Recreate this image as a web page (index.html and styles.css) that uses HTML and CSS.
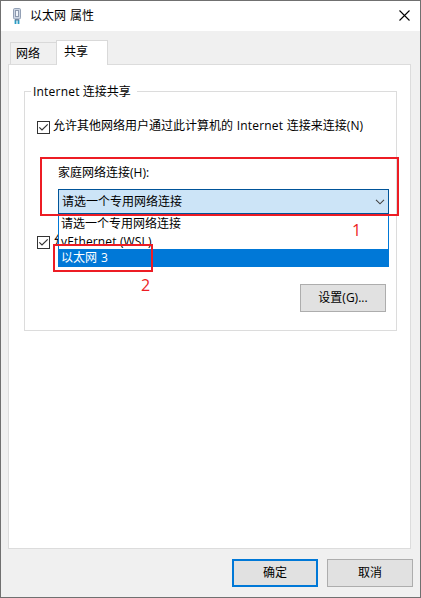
FILE: index.html
```html
<!DOCTYPE html>
<html lang="zh-CN">
<head>
  <meta charset="UTF-8" />
  <meta name="viewport" content="width=device-width, initial-scale=1.0" />
  <title>以太网 属性</title>
  <link rel="stylesheet" href="styles.css">
</head>
<body>
  <div class="window">
    <!-- 标题栏 -->
    <div class="titlebar">
      <svg class="plug" width="10" height="17" viewBox="0 0 10 17">
        <path d="M3.5 12v4M6.5 12v4" stroke="#2a9cc4" stroke-width="1.8" />
        <path d="M3 11h4v1.5H3z" fill="#5b7590" />
        <rect x="1.5" y="0.5" width="7" height="10.5" rx="1.2" fill="#cdd6e4" stroke="#93a0b5" />
        <rect x="3.5" y="2.5" width="3" height="6" fill="#f0f4fa" stroke="#8d99ad" />
      </svg>
      <span class="title">以太网 属性</span>
      <svg class="close" width="11" height="11" viewBox="0 0 11 11">
        <path d="M0.5 0.5l10 10M10.5 0.5l-10 10" stroke="#000" stroke-width="1.1" />
      </svg>
    </div>

    <!-- 选项卡 -->
    <div class="tabs">
      <div class="tab">网络</div>
      <div class="tab active">共享</div>
    </div>

    <div class="pane">
      <div class="group">
        <div class="legend"><span class="net">Internet</span> 连接共享</div>

        <div class="check-row">
          <span class="checkbox">
            <svg width="11" height="11" viewBox="0 0 11 11"><path d="M1.3 5.3l2.7 2.7L9.7 2.3" fill="none" stroke="#333" stroke-width="1.2" /></svg>
          </span>
          <span class="check-text">允许其他网络用户通过此计算机的 <span class="net">Internet</span> 连接来连接(N)</span>
        </div>

        <div class="home">
          <div class="home-label">家庭网络连接(H):</div>
          <div class="combo">
            <span>请选一个专用网络连接</span>
            <svg width="10" height="6" viewBox="0 0 10 6"><path d="M1 0.8l4 4 4-4" fill="none" stroke="#444" stroke-width="1.1" /></svg>
            <div class="dropdown">
              <div class="option">请选一个专用网络连接</div>
              <div class="option clipped">vEthernet (WSL)</div>
              <div class="option selected">以太网 3</div>
            </div>
          </div>
          <div class="mark mark-combo"></div>
          <div class="mark mark-option"></div>
          <div class="num num-one">1</div>
          <div class="num num-two">2</div>
        </div>

        <div class="check-row second">
          <span class="checkbox">
            <svg width="11" height="11" viewBox="0 0 11 11"><path d="M1.3 5.3l2.7 2.7L9.7 2.3" fill="none" stroke="#333" stroke-width="1.2" /></svg>
          </span>
          <span class="covered">允</span>
        </div>

        <button class="btn settings">设置(G)...</button>
      </div>
    </div>

    <!-- 底部按钮 -->
    <div class="footer">
      <button class="btn primary">确定</button>
      <button class="btn">取消</button>
    </div>
  </div>
</body>
</html>
```

FILE: styles.css
```css
* {
  box-sizing: border-box;
}
body {
  margin: 0;
  font-family: "Open Sans", "Noto Sans CJK SC", sans-serif;
  font-size: 12px;
  line-height: 16px;
  color: #000;
}
.window {
  width: 421px;
  height: 598px;
  background: #f0f0f0;
  border: 1px solid #707070;
  overflow: hidden;
}
/* 标题栏 */
.titlebar {
  display: flex;
  align-items: center;
  height: 30px;
  padding: 0 10px 0 11px;
  background: #fff;
}
.title {
  margin-left: 8px;
  word-spacing: 1px;
}
.close {
  margin: 0 0 2px auto;
}
/* 选项卡 */
.tabs {
  display: flex;
  align-items: flex-end;
  height: 33px;
  padding-left: 9px;
}
.tab {
  width: 46px;
  height: 22px;
  padding: 3px 0 0 5px;
  border: 1px solid #d9d9d9;
  border-right: none;
  border-bottom: none;
}
.tab.active {
  position: relative;
  width: 52px;
  height: 25px;
  margin-bottom: -1px;
  padding-left: 7px;
  border-right: 1px solid #d9d9d9;
  background: #fff;
}
.pane {
  width: 403px;
  height: 485px;
  margin-left: 7px;
  padding: 26px 13px 0 15px;
  background: #fff;
  border: 1px solid #dcdcdc;
}
/* 共享分组 */
.group {
  height: 240px;
  border: 1px solid #dcdcdc;
}
.legend {
  width: 106px;
  height: 16px;
  margin: -8px 0 0 6px;
  padding-left: 2px;
  background: #fff;
  white-space: nowrap;
}
.net {
  letter-spacing: 0.2px;
}
.check-row {
  display: flex;
  height: 16px;
  margin: 18px 0 0 12px;
  gap: 3px;
  white-space: nowrap;
}
.check-text {
  word-spacing: 0.5px;
}
.checkbox {
  flex: none;
  width: 13px;
  height: 13px;
  margin-top: 3px;
  border: 1px solid #333;
  background: #fff;
}
.checkbox svg {
  display: block;
}
.home {
  position: relative;
  width: 331px;
  height: 50px;
  margin: 30px 0 0 33px;
}
.home-label {
  height: 25px;
  padding-top: 1px;
}
.combo {
  position: relative;
  display: flex;
  align-items: center;
  justify-content: space-between;
  height: 25px;
  padding: 0 3px;
  background: #cce4f7;
  border: 1px solid #005499;
}
.dropdown {
  position: absolute;
  top: 24px;
  left: -1px;
  z-index: 1;
  width: 331px;
  height: 53px;
  background: #fff;
  border: 1px solid #0078d7;
  border-top: none;
}
.option {
  height: 18px;
  padding-left: 2px;
  line-height: 20px;
}
.option.clipped {
  height: 17px;
  overflow: hidden;
  letter-spacing: 0.15px;
}
.option.selected {
  background: #0078d7;
  color: #fff;
  line-height: 18px;
  word-spacing: 1px;
}
.second {
  margin-top: 19px;
}
/* 只露出下拉列表左侧的部分 */
.covered {
  width: 5px;
  overflow: hidden;
}
/* 红色标注 */
.mark {
  position: absolute;
  z-index: 2;
  border: 2px solid #ed1c24;
}
.mark-combo {
  top: -7px;
  left: -18px;
  width: 359px;
  height: 59px;
}
.mark-option {
  top: 80px;
  left: -5px;
  width: 100px;
  height: 28px;
}
.num {
  position: absolute;
  z-index: 2;
  color: #ed1c24;
  font-size: 16px;
}
.num-one {
  top: 58px;
  left: 294px;
}
.num-two {
  top: 113px;
  left: 83px;
}
/* 按钮 */
.btn {
  width: 86px;
  height: 28px;
  padding: 0 0 1px;
  background: #e1e1e1;
  border: 1px solid #adadad;
  font: inherit;
  color: #000;
}
.btn.primary {
  border: 2px solid #0078d7;
}
.settings {
  display: block;
  margin: 35px 10px 0 auto;
}
.footer {
  display: flex;
  justify-content: flex-end;
  gap: 9px;
  padding: 10px 7px 0 0;
}
```
